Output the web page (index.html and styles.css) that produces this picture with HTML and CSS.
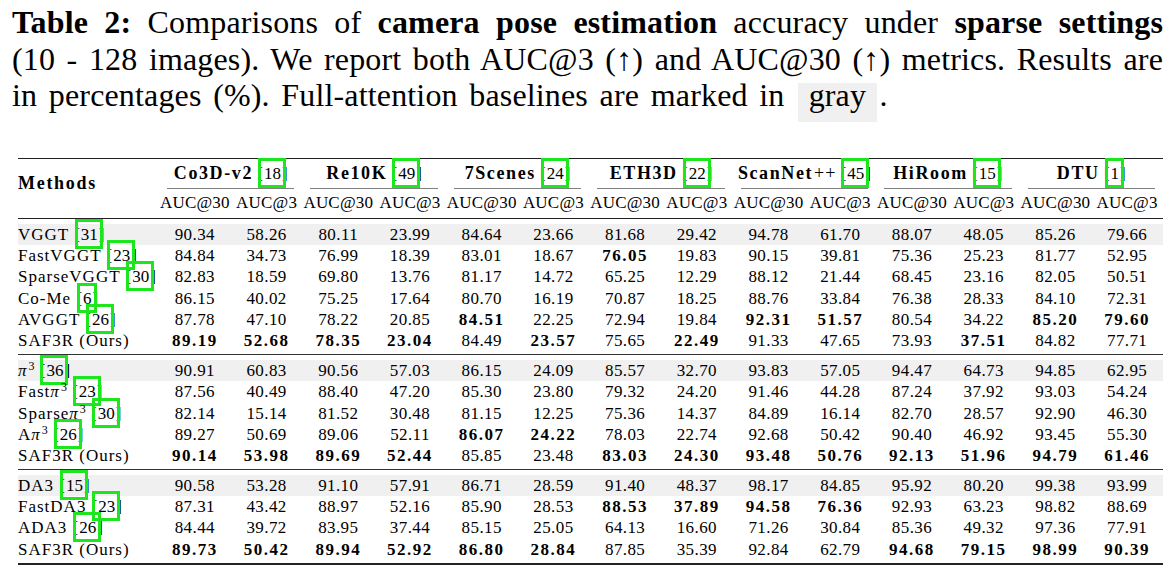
FILE: index.html
```html
<!DOCTYPE html>
<html lang="en">
<head>
<meta charset="utf-8">
<title>Table 2</title>
<link rel="stylesheet" href="styles.css">
</head>
<body>
<div class="page">
  <div class="caption">
    <div class="cap-line justify"><b>Table 2:</b> Comparisons of <b>camera pose estimation</b> accuracy under <b>sparse settings</b></div>
    <div class="cap-line justify">(10 - 128 images). We report both AUC@3 (↑) and AUC@30 (↑) metrics. Results are</div>
    <div class="cap-line last">in percentages (%). Full-attention baselines are marked in <span class="hl">gray</span>.</div>
  </div>

  <div class="tbl">
    <div class="thead">
      <div class="methods-h">Methods</div>
      <div class="grp"><span class="gt"><b>Co3D-v2</b> <span class="cite">[<span class="ref">18</span>]</span></span></div>
      <div class="grp"><span class="gt"><b>Re10K</b> <span class="cite">[<span class="ref">49</span>]</span></span></div>
      <div class="grp"><span class="gt"><b>7Scenes</b> <span class="cite">[<span class="ref">24</span>]</span></span></div>
      <div class="grp"><span class="gt"><b>ETH3D</b> <span class="cite">[<span class="ref">22</span>]</span></span></div>
      <div class="grp"><span class="gt"><b>ScanNet</b><span class="pp">++</span> <span class="cite">[<span class="ref">45</span>]</span></span></div>
      <div class="grp"><span class="gt"><b>HiRoom</b> <span class="cite">[<span class="ref">15</span>]</span></span></div>
      <div class="grp"><span class="gt"><b>DTU</b> <span class="cite">[<span class="ref">1</span>]</span></span></div>
      <div class="sub">AUC@30</div><div class="sub">AUC@3</div>
      <div class="sub">AUC@30</div><div class="sub">AUC@3</div>
      <div class="sub">AUC@30</div><div class="sub">AUC@3</div>
      <div class="sub">AUC@30</div><div class="sub">AUC@3</div>
      <div class="sub">AUC@30</div><div class="sub">AUC@3</div>
      <div class="sub">AUC@30</div><div class="sub">AUC@3</div>
      <div class="sub">AUC@30</div><div class="sub">AUC@3</div>
    </div>

    <div class="group">
      <div class="row shade">
        <div class="m">VGGT <span class="cite">[<span class="ref">31</span>]</span></div>
        <div>90.34</div><div>58.26</div><div>80.11</div><div>23.99</div><div>84.64</div><div>23.66</div><div>81.68</div><div>29.42</div><div>94.78</div><div>61.70</div><div>88.07</div><div>48.05</div><div>85.26</div><div>79.66</div>
      </div>
      <div class="row">
        <div class="m">FastVGGT <span class="cite">[<span class="ref">23</span>]</span></div>
        <div>84.84</div><div>34.73</div><div>76.99</div><div>18.39</div><div>83.01</div><div>18.67</div><div class="b">76.05</div><div>19.83</div><div>90.15</div><div>39.81</div><div>75.36</div><div>25.23</div><div>81.77</div><div>52.95</div>
      </div>
      <div class="row">
        <div class="m">SparseVGGT <span class="cite">[<span class="ref">30</span>]</span></div>
        <div>82.83</div><div>18.59</div><div>69.80</div><div>13.76</div><div>81.17</div><div>14.72</div><div>65.25</div><div>12.29</div><div>88.12</div><div>21.44</div><div>68.45</div><div>23.16</div><div>82.05</div><div>50.51</div>
      </div>
      <div class="row">
        <div class="m">Co-Me <span class="cite">[<span class="ref">6</span>]</span></div>
        <div>86.15</div><div>40.02</div><div>75.25</div><div>17.64</div><div>80.70</div><div>16.19</div><div>70.87</div><div>18.25</div><div>88.76</div><div>33.84</div><div>76.38</div><div>28.33</div><div>84.10</div><div>72.31</div>
      </div>
      <div class="row">
        <div class="m">AVGGT <span class="cite">[<span class="ref">26</span>]</span></div>
        <div>87.78</div><div>47.10</div><div>78.22</div><div>20.85</div><div class="b">84.51</div><div>22.25</div><div>72.94</div><div>19.84</div><div class="b">92.31</div><div class="b">51.57</div><div>80.54</div><div>34.22</div><div class="b">85.20</div><div class="b">79.60</div>
      </div>
      <div class="row">
        <div class="m">SAF3R (Ours)</div>
        <div class="b">89.19</div><div class="b">52.68</div><div class="b">78.35</div><div class="b">23.04</div><div>84.49</div><div class="b">23.57</div><div>75.65</div><div class="b">22.49</div><div>91.33</div><div>47.65</div><div>73.93</div><div class="b">37.51</div><div>84.82</div><div>77.71</div>
      </div>
    </div>

    <div class="group">
      <div class="row shade">
        <div class="m"><i>π</i><span class="sup">3</span> <span class="cite">[<span class="ref">36</span>]</span></div>
        <div>90.91</div><div>60.83</div><div>90.56</div><div>57.03</div><div>86.15</div><div>24.09</div><div>85.57</div><div>32.70</div><div>93.83</div><div>57.05</div><div>94.47</div><div>64.73</div><div>94.85</div><div>62.95</div>
      </div>
      <div class="row">
        <div class="m">Fast<i>π</i><span class="sup">3</span> <span class="cite">[<span class="ref">23</span>]</span></div>
        <div>87.56</div><div>40.49</div><div>88.40</div><div>47.20</div><div>85.30</div><div>23.80</div><div>79.32</div><div>24.20</div><div>91.46</div><div>44.28</div><div>87.24</div><div>37.92</div><div>93.03</div><div>54.24</div>
      </div>
      <div class="row">
        <div class="m">Sparse<i>π</i><span class="sup">3</span> <span class="cite">[<span class="ref">30</span>]</span></div>
        <div>82.14</div><div>15.14</div><div>81.52</div><div>30.48</div><div>81.15</div><div>12.25</div><div>75.36</div><div>14.37</div><div>84.89</div><div>16.14</div><div>82.70</div><div>28.57</div><div>92.90</div><div>46.30</div>
      </div>
      <div class="row">
        <div class="m">A<i>π</i><span class="sup">3</span> <span class="cite">[<span class="ref">26</span>]</span></div>
        <div>89.27</div><div>50.69</div><div>89.06</div><div>52.11</div><div class="b">86.07</div><div class="b">24.22</div><div>78.03</div><div>22.74</div><div>92.68</div><div>50.42</div><div>90.40</div><div>46.92</div><div>93.45</div><div>55.30</div>
      </div>
      <div class="row">
        <div class="m">SAF3R (Ours)</div>
        <div class="b">90.14</div><div class="b">53.98</div><div class="b">89.69</div><div class="b">52.44</div><div>85.85</div><div>23.48</div><div class="b">83.03</div><div class="b">24.30</div><div class="b">93.48</div><div class="b">50.76</div><div class="b">92.13</div><div class="b">51.96</div><div class="b">94.79</div><div class="b">61.46</div>
      </div>
    </div>

    <div class="group last">
      <div class="row shade">
        <div class="m">DA3 <span class="cite">[<span class="ref">15</span>]</span></div>
        <div>90.58</div><div>53.28</div><div>91.10</div><div>57.91</div><div>86.71</div><div>28.59</div><div>91.40</div><div>48.37</div><div>98.17</div><div>84.85</div><div>95.92</div><div>80.20</div><div>99.38</div><div>93.99</div>
      </div>
      <div class="row">
        <div class="m">FastDA3 <span class="cite">[<span class="ref">23</span>]</span></div>
        <div>87.31</div><div>43.42</div><div>88.97</div><div>52.16</div><div>85.90</div><div>28.53</div><div class="b">88.53</div><div class="b">37.89</div><div class="b">94.58</div><div class="b">76.36</div><div>92.93</div><div>63.23</div><div>98.82</div><div>88.69</div>
      </div>
      <div class="row">
        <div class="m">ADA3 <span class="cite">[<span class="ref">26</span>]</span></div>
        <div>84.44</div><div>39.72</div><div>83.95</div><div>37.44</div><div>85.15</div><div>25.05</div><div>64.13</div><div>16.60</div><div>71.26</div><div>30.84</div><div>85.36</div><div>49.32</div><div>97.36</div><div>77.91</div>
      </div>
      <div class="row">
        <div class="m">SAF3R (Ours)</div>
        <div class="b">89.73</div><div class="b">50.42</div><div class="b">89.94</div><div class="b">52.92</div><div class="b">86.80</div><div class="b">28.84</div><div>87.85</div><div>35.39</div><div>92.84</div><div>62.79</div><div class="b">94.68</div><div class="b">79.15</div><div class="b">98.99</div><div class="b">90.39</div>
      </div>
    </div>
  </div>
</div>
</body>
</html>
```

FILE: styles.css
```css
html {
  background: #fff;
}

body {
  margin: 0;
  padding: 0;
  color: #000;
}

.page {
  padding: 4px 0 0 12px;
  font-family: "Liberation Serif", "Times New Roman", serif;
}

/* ---------- caption ---------- */
.caption {
  width: 1151px;
  font-size: 32px;
  line-height: 36.5px;
  letter-spacing: 0.15px;
  word-spacing: 2px;
}

.cap-line {
  white-space: nowrap;
}

.cap-line.justify {
  text-align: justify;
  text-align-last: justify;
}

.cap-line.last {
  word-spacing: 3.5px;
}

.hl {
  position: relative;
  z-index: 0;
  padding: 0 10.5px;
  margin-left: 2px;
  margin-right: 3px;
}

.hl::before {
  content: "";
  position: absolute;
  left: 0;
  right: 0;
  top: 5.5px;
  bottom: -9px;
  background: #f0f0f0;
  z-index: -1;
}

/* ---------- table ---------- */
.tbl {
  margin-top: 44px;
  margin-left: 6px;
  width: 1145px;
  font-size: 17px;
}

.thead,
.row {
  display: grid;
  grid-template-columns: 141px repeat(14, 1fr);
}

.thead {
  grid-template-rows: 30px 29.5px;
  border-top: 1.8px solid #222;
  border-bottom: 1px solid #222;
}

.methods-h {
  grid-row: 1 / 3;
  grid-column: 1;
  align-self: center;
  padding-bottom: 10px;
  font-weight: bold;
  font-size: 18px;
  letter-spacing: 1.7px;
}

.grp {
  grid-column: span 2;
  grid-row: 1;
  margin: 0 8px;
  border-bottom: 1.4px solid #808080;
  display: flex;
  align-items: center;
  justify-content: center;
  white-space: nowrap;
}

.gt b {
  font-size: 18px;
  letter-spacing: 1.6px;
}

.gt .pp {
  font-size: 18px;
  letter-spacing: 1px;
  padding-left: 1px;
}

.sub {
  grid-row: 2;
  display: flex;
  align-items: center;
  justify-content: center;
  white-space: nowrap;
  letter-spacing: 0.2px;
}

.group {
  padding: 5px 0 3px;
  border-bottom: 1px solid #333;
}

.group.last {
  border-bottom: 2px solid #222;
}

.row {
  height: 21.2px;
  line-height: 21.2px;
  text-align: center;
  letter-spacing: 0.4px;
}

.row.shade {
  background: #f0f0f0;
}

.row .m {
  text-align: left;
  letter-spacing: 1px;
  white-space: nowrap;
}

.row .b {
  font-weight: bold;
  letter-spacing: 1.5px;
}

.sup {
  position: relative;
  top: -0.5em;
  font-size: 12px;
  margin-left: 1px;
  letter-spacing: 0;
}

/* ---------- citation link boxes ---------- */
.cite {
  letter-spacing: 0;
  font-weight: normal;
  font-size: 17px;
}

.ref {
  position: relative;
  padding: 0 1px;
}

.ref::after {
  content: "";
  position: absolute;
  left: -5px;
  right: -4px;
  top: -6px;
  bottom: -5px;
  border: 3px solid #1ee61e;
}
```
